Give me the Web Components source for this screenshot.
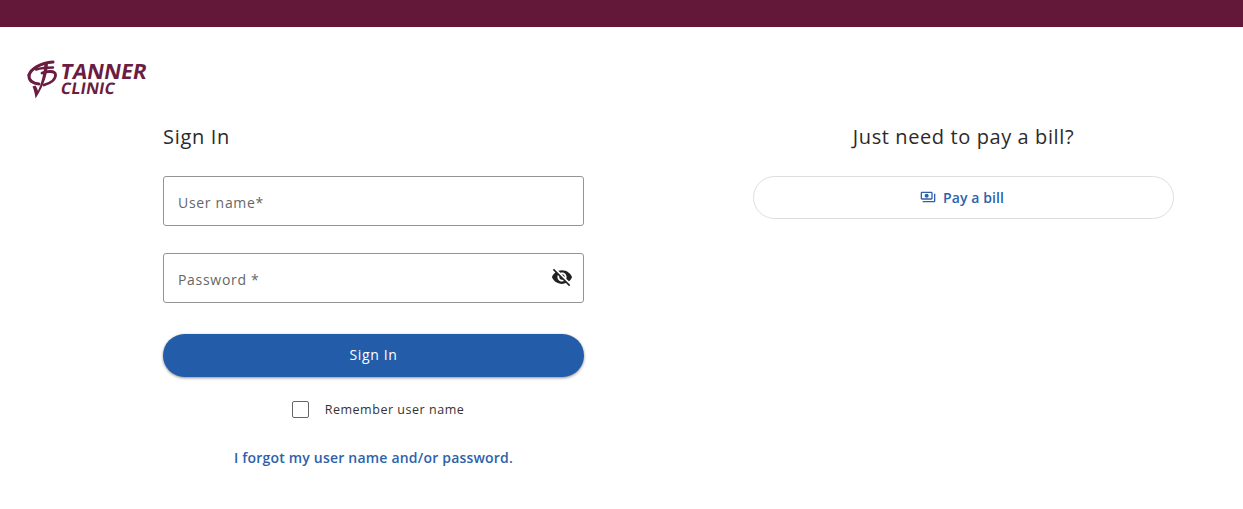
<!DOCTYPE html>
<html lang="en">
<head>
<meta charset="utf-8">
<title>Sign In</title>
<style>
  html, body { margin: 0; padding: 0; background: #fff; }
  body { font-family: "Open Sans", sans-serif; color: #212121; }
</style>
</head>
<body>
<clinic-page>
  <clinic-logo slot="logo"></clinic-logo>
  <sign-in-panel slot="left"></sign-in-panel>
  <pay-panel slot="right"></pay-panel>
</clinic-page>

<script>
//Page shell: top bar, logo, two columns
class ClinicPage extends HTMLElement {
  constructor() {
    super();
    this.attachShadow({ mode: "open" }).innerHTML = `
      <style>
        :host { display: block; }
        .bar { height: 27px; background: #63183a; }
        .logo { padding: 33px 0 0 27px; height: 40px; }
        .cols { display: flex; gap: 169px; padding: 23px 0 0 163px; }
        ::slotted([slot=left]), ::slotted([slot=right]) { width: 421px; }
      </style>
      <div class="bar"></div>
      <div class="logo"><slot name="logo"></slot></div>
      <div class="cols">
        <slot name="left"></slot>
        <slot name="right"></slot>
      </div>`;
  }
}

class ClinicLogo extends HTMLElement {
  constructor() {
    super();
    this.attachShadow({ mode: "open" }).innerHTML = `
      <style>
        :host { display: flex; gap: 0; color: #6b1c41; height: 40px; }
        svg { width: 34px; height: 40px; flex: none; }
        .words { display: flex; flex-direction: column; align-items: flex-start; font-family: "Open Sans", sans-serif; font-weight: 700; }
        .t { display: block; font-size: 21px; line-height: 20px; margin-top: 1px; letter-spacing: -.1px; transform: skewX(-10deg); }
        .c { display: block; font-size: 16px; line-height: 15px; margin-top: 0; letter-spacing: .2px; transform: skewX(-10deg); }
      </style>
      <svg viewBox="0 0 34 40" fill="none" stroke="currentColor" stroke-linecap="round">
        <path d="M2 15C4 9 13 3 26 2" stroke-width="3"/>
        <path d="M9 9.500C14 8 20 7.500 26 7.500" stroke-width="2.400"/>
        <path d="M2 15C1.500 21 6 23.500 12 24" stroke-width="3"/>
        <path d="M15 13C20 11 28 10.500 28.500 14.500C29 19 24 23 17 25" stroke-width="2.800"/>
        <path d="M17.500 3L21 3C20.500 13 18 24 8.500 38.500C8 34 7 30 5.500 26.500L8.500 25.500C9.500 27 10.500 29 11 31C14.500 23 17 13 17.500 3z" fill="currentColor" stroke="none"/>
      </svg>
      <div class="words"><span class="t">TANNER</span><span class="c">CLINIC</span></div>`;
  }
}

//Outlined text box with optional trailing icon slot
class TextField extends HTMLElement {
  constructor() {
    super();
    this.attachShadow({ mode: "open" }).innerHTML = `
      <style>
        :host { display: flex; align-items: center; justify-content: space-between; box-sizing: border-box; height: 50px; padding: 2px 10px 0 14px; border: 1px solid #949494; border-radius: 3px; }
        .label { font-size: 14px; letter-spacing: .7px; color: #666; }
        ::slotted(svg) { display: block; width: 22px; height: 22px; color: #212121; margin-top: -4px; }
      </style>
      <span class="label"><slot></slot></span>
      <slot name="end"></slot>`;
  }
}

class PillButton extends HTMLElement {
  constructor() {
    super();
    this.attachShadow({ mode: "open" }).innerHTML = `
      <style>
        :host { display: flex; align-items: center; justify-content: center; gap: 7px; box-sizing: border-box; border-radius: 22px; font-size: 14px; font-weight: 600; letter-spacing: .1px; }
        :host([variant=primary]) { height: 43px; padding-bottom: 2px; background: #235ca8; color: #fff; box-shadow: 0 1px 3px rgba(0,0,0,.45); font-weight: 500; letter-spacing: .65px; }
        :host([variant=outline]) { height: 43px; padding-right: 3px; background: #fff; color: #2d62ab; border: 1px solid #dedede; }
        ::slotted(svg) { width: 16px; height: 16px; fill: currentColor; margin-top: -2px; }
      </style>
      <slot></slot>`;
  }
}

class CheckRow extends HTMLElement {
  constructor() {
    super();
    this.attachShadow({ mode: "open" }).innerHTML = `
      <style>
        :host { display: flex; align-items: center; justify-content: center; gap: 16px; padding-left: 9px; font-size: 12.500px; letter-spacing: .53px; color: #333; }
        .box { box-sizing: border-box; width: 17px; height: 17px; border: 1px solid #666; border-radius: 2px; background: #fff; }
      </style>
      <span class="box"></span><span><slot></slot></span>`;
  }
}

class SignInPanel extends HTMLElement {
  constructor() {
    super();
    this.attachShadow({ mode: "open" }).innerHTML = `
      <style>
        :host { display: block; }
        h2 { margin: 0 0 26px; font-size: 20px; line-height: 27px; font-weight: 400; letter-spacing: .7px; color: #2b2b2b; }
        text-field + text-field { margin-top: 27px; }
        pill-button { margin-top: 31px; }
        check-row { margin-top: 24px; }
        a { display: block; margin-top: 30px; text-align: center; font-size: 14px; font-weight: 600; letter-spacing: .2px; color: #2d62ab; text-decoration: none; }
      </style>
      <h2>Sign In</h2>
      <text-field>User name*</text-field>
      <text-field>Password *
        <svg slot="end" viewBox="0 0 24 24" fill="currentColor"><path d="M12 7c2.760 0 5 2.240 5 5 0 .65-.13 1.260-.36 1.830l2.920 2.920c1.510-1.260 2.700-2.890 3.430-4.750-1.730-4.390-6-7.500-11-7.500-1.400 0-2.740.25-3.980.7l2.160 2.160C10.740 7.130 11.350 7 12 7zM2 4.270l2.280 2.280.46.46C3.080 8.300 1.780 10.020 1 12c1.730 4.390 6 7.500 11 7.500 1.550 0 3.030-.3 4.380-.84l.42.42L19.730 22 21 20.730 3.270 3 2 4.270zM7.530 9.800l1.550 1.550c-.05.21-.08.43-.08.65 0 1.660 1.340 3 3 3 .22 0 .44-.03.65-.08l1.550 1.550c-.67.33-1.410.53-2.200.53-2.760 0-5-2.240-5-5 0-.79.2-1.530.53-2.200zm4.310-.78l3.150 3.150.02-.16c0-1.660-1.340-3-3-3l-.17.01z"/></svg>
      </text-field>
      <pill-button variant="primary">Sign In</pill-button>
      <check-row>Remember user name</check-row>
      <a href="#">I forgot my user name and/or password.</a>`;
  }
}

class PayPanel extends HTMLElement {
  constructor() {
    super();
    this.attachShadow({ mode: "open" }).innerHTML = `
      <style>
        :host { display: block; }
        h2 { margin: 0 0 26px; font-size: 20px; line-height: 27px; font-weight: 400; letter-spacing: .6px; text-align: center; color: #2b2b2b; }
      </style>
      <h2>Just need to pay a bill?</h2>
      <pill-button variant="outline">
        <svg viewBox="0 0 24 24"><path d="M19 14V6c0-1.100-.9-2-2-2H3c-1.100 0-2 .9-2 2v8c0 1.100.9 2 2 2h14c1.100 0 2-.9 2-2zm-2 0H3V6h14v8zm-7-7c-1.660 0-3 1.340-3 3s1.340 3 3 3 3-1.340 3-3-1.340-3-3-3zm13 0v11c0 1.100-.9 2-2 2H4v-2h17V7h2z"/></svg>
        Pay a bill
      </pill-button>`;
  }
}

customElements.define("text-field", TextField);
customElements.define("pill-button", PillButton);
customElements.define("check-row", CheckRow);
customElements.define("clinic-logo", ClinicLogo);
customElements.define("sign-in-panel", SignInPanel);
customElements.define("pay-panel", PayPanel);
customElements.define("clinic-page", ClinicPage);
</script>
</body>
</html>
